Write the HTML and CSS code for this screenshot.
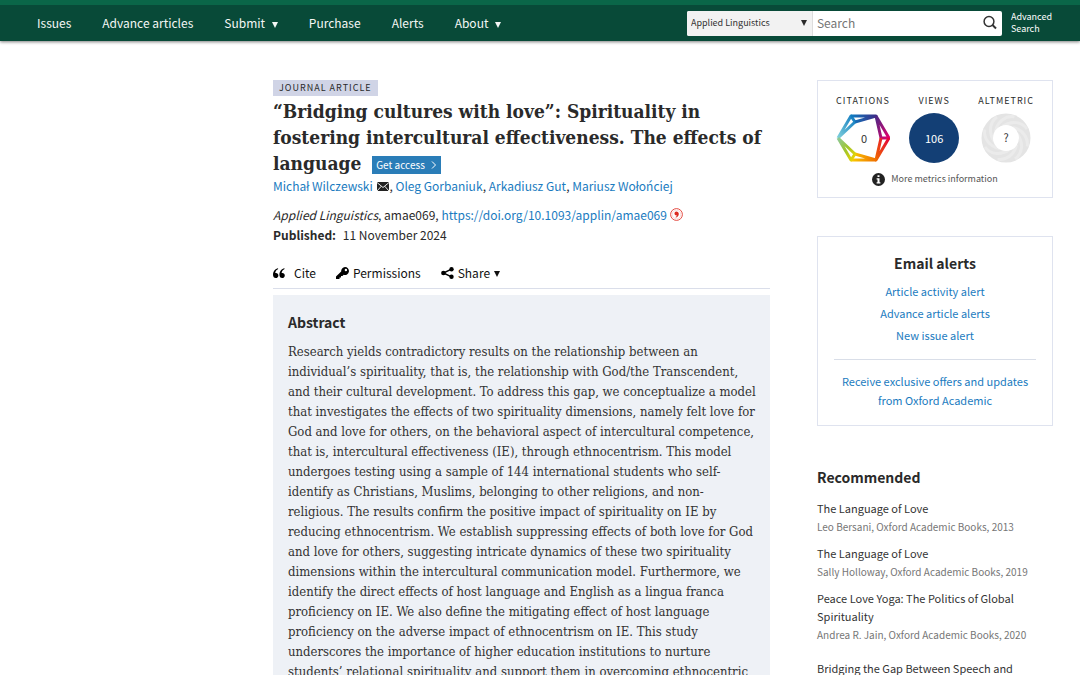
FILE: index.html
```html
<!DOCTYPE html>
<html lang="en">
<head>
<meta charset="utf-8">
<title>Bridging cultures with love | Applied Linguistics</title>
<link rel="stylesheet" href="styles.css">
</head>
<body>
<header class="site-header">
  <nav class="main-nav" aria-label="Journal">
    <a href="#">Issues</a>
    <a href="#">Advance articles</a>
    <a href="#">Submit <span class="caret"></span></a>
    <a href="#">Purchase</a>
    <a href="#">Alerts</a>
    <a href="#">About <span class="caret"></span></a>
  </nav>
  <form class="search">
    <div class="search-box">
      <div class="scope">
        <select aria-label="Search scope"><option>Applied Linguistics</option></select>
        <span class="caret"></span>
      </div>
      <input type="text" placeholder="Search" aria-label="Search term">
      <button type="button" class="search-button" aria-label="Search">
        <svg width="16" height="16" viewBox="0 0 16 16" fill="none" stroke="#333" stroke-width="1.5"><circle cx="7" cy="6.500" r="4.900"/><path d="M10.500 10 14 13.500" stroke-width="2"/></svg>
      </button>
    </div>
    <a class="advanced" href="#">Advanced<br>Search</a>
  </form>
</header>

<div class="page">
  <main class="article">
    <div class="badge">JOURNAL ARTICLE</div>
    <h1 class="title">“Bridging cultures with love”: Spirituality in<br>fostering intercultural effectiveness. The effects of<br>language <a class="access" href="#">Get access
      <svg width="6" height="8" viewBox="0 0 6 8" fill="none" stroke="currentColor"><path d="M1 .5 4.5 4 1 7.5"/></svg></a></h1>
    <div class="authors"><a href="#">Michał Wilczewski</a>
      <svg class="mail" width="12" height="9" viewBox="0 0 12 9"><path fill="#222" d="M0 0h12v9H0z"/><path d="M0 .5 6 5.5 12 .5M0 9l4.3-4.8M12 9 7.7 4.2" fill="none" stroke="#fff" stroke-width=".9"/></svg>,
      <a href="#">Oleg Gorbaniuk</a>, <a href="#">Arkadiusz Gut</a>, <a href="#">Mariusz Wołońciej</a></div>
    <div class="citation"><em>Applied Linguistics</em>, amae069, <a href="#">https://doi.org/10.1093/applin/amae069</a>
      <svg class="crossmark" width="13" height="13" viewBox="0 0 13 13"><circle cx="6.5" cy="6.5" r="5.9" fill="#fff" stroke="#e0382e" stroke-width=".9"/><circle cx="6.5" cy="6.5" r="4.3" fill="none" stroke="#f0a7a2" stroke-width=".4"/><path d="M6.3 3.4c1.5 0 2.5 1 2.5 2.5 0 1.8-1.3 3.2-3 3.7l-.3-.6c.9-.4 1.4-.9 1.5-1.5-1.400.3-2.5-.6-2.500-1.900 0-1.300.800-2.200 1.800-2.200z" fill="#dc2a20"/></svg></div>
    <div class="published"><strong>Published:</strong> 11 November 2024</div>

    <div class="toolbar">
      <a class="cite" href="#"><svg width="12" height="10" viewBox="0 0 12 10"><path id="quote" d="M5 .2C2.500.8 0 3 0 6.700 0 8.700 1.100 10 2.800 10c1.500 0 2.600-1.100 2.600-2.600S4.400 4.900 3 4.900c-.3 0-.6 0-.8.1C2.400 3.200 3.600 1.700 5.200 1z"/><use href="#quote" x="6.400"/></svg>Cite</a>
      <a class="permissions" href="#"><svg width="13" height="12" viewBox="0 0 13 12"><path fill-rule="evenodd" d="M9 0a4 4 0 1 1-1.300 7.800L6.500 9H5v1.500H3.500V12H0V9.500l5.200-5.100A4 4 0 0 1 9 0zm.9 1.800a1.200 1.200 0 1 0 0 2.400 1.200 1.200 0 0 0 0-2.400z"/></svg>Permissions</a>
      <a class="share" href="#"><svg width="13" height="12" viewBox="0 0 13 12"><path d="M10.500 2.200 2.400 6l8.100 3.800" fill="none" stroke="#000" stroke-width="1.400"/><circle cx="2.400" cy="6" r="2.300"/><circle cx="10.500" cy="2.200" r="2.200"/><circle cx="10.500" cy="9.800" r="2.200"/></svg>Share<span class="caret"></span></a>
    </div>

    <section class="abstract">
      <h2>Abstract</h2>
      <p>Research yields contradictory results on the relationship between an<br>individual’s spirituality, that is, the relationship with God/the Transcendent,<br>and their cultural development. To address this gap, we conceptualize a model<br>that investigates the effects of two spirituality dimensions, namely felt love for<br>God and love for others, on the behavioral aspect of intercultural competence,<br>that is, intercultural effectiveness (IE), through ethnocentrism. This model<br>undergoes testing using a sample of 144 international students who self-<br>identify as Christians, Muslims, belonging to other religions, and non-<br>religious. The results confirm the positive impact of spirituality on IE by<br>reducing ethnocentrism. We establish suppressing effects of both love for God<br>and love for others, suggesting intricate dynamics of these two spirituality<br>dimensions within the intercultural communication model. Furthermore, we<br>identify the direct effects of host language and English as a lingua franca<br>proficiency on IE. We also define the mitigating effect of host language<br>proficiency on the adverse impact of ethnocentrism on IE. This study<br>underscores the importance of higher education institutions to nurture<br>students’ relational spirituality and support them in overcoming ethnocentric</p>
    </section>
  </main>

  <aside class="sidebar">
    <section class="card metrics">
      <div class="metric-row">
        <div class="metric">
          <div class="metric-label">CITATIONS</div>
          <svg width="54" height="50" viewBox="0 0 54 50" fill="none" stroke-width="3" stroke-linejoin="round">
            <defs>
              <linearGradient id="g1" x1="0" y1="1" x2="1" y2="0"><stop offset="0" stop-color="#7fd0dc"/><stop offset="1" stop-color="#0d78bf"/></linearGradient>
              <linearGradient id="g2" gradientUnits="userSpaceOnUse" x1="14" y1="2" x2="40" y2="2"><stop offset="0" stop-color="#0b7fc4"/><stop offset="1" stop-color="#3b2d87"/></linearGradient>
              <linearGradient id="g3" x1="0" y1="0" x2="1" y2="1"><stop offset="0" stop-color="#4a2a85"/><stop offset="1" stop-color="#e5006d"/></linearGradient>
              <linearGradient id="g4" x1="1" y1="0" x2="0" y2="1"><stop offset="0" stop-color="#e4003a"/><stop offset="1" stop-color="#f06b00"/></linearGradient>
              <linearGradient id="g5" gradientUnits="userSpaceOnUse" x1="40" y1="48" x2="14" y2="48"><stop offset="0" stop-color="#ef7000"/><stop offset="1" stop-color="#fbd000"/></linearGradient>
              <linearGradient id="g6" x1="0" y1="0" x2="1" y2="1"><stop offset="0" stop-color="#8dc99b"/><stop offset=".5" stop-color="#9fc52b"/><stop offset="1" stop-color="#f3d500"/></linearGradient>
            </defs>
            <path stroke="url(#g1)" d="M2 25 15 3 19 9 2 25"/>
            <path stroke="url(#g2)" d="M15 3 40 3 19 9"/>
            <path stroke="url(#g3)" d="M40 3 53 25H45L40 3"/>
            <path stroke="url(#g4)" d="M53 25 40 47 45 25"/>
            <path stroke="url(#g5)" d="M40 47H15M19 41 40 47"/>
            <path stroke="url(#g6)" d="M2 25 15 47 19 41 2 25"/>
            <text x="28" y="30" class="donut-text">0</text>
          </svg>
        </div>
        <div class="metric">
          <div class="metric-label">VIEWS</div>
          <div class="views">106</div>
        </div>
        <div class="metric">
          <div class="metric-label">ALTMETRIC</div>
          <svg width="50" height="50" viewBox="0 0 50 50">
            <circle cx="25" cy="25" r="24.500" fill="#e4e4e4"/>
            <g fill="none" stroke="#ebebeb" stroke-width="3">
              <path id="swirl" d="M22 13C31 7 41 9 46 16"/>
              <use href="#swirl" transform="rotate(45 25 25)"/><use href="#swirl" transform="rotate(90 25 25)"/><use href="#swirl" transform="rotate(135 25 25)"/><use href="#swirl" transform="rotate(180 25 25)"/><use href="#swirl" transform="rotate(225 25 25)"/><use href="#swirl" transform="rotate(270 25 25)"/><use href="#swirl" transform="rotate(315 25 25)"/>
            </g>
            <circle cx="25" cy="25" r="13" fill="#fff"/>
            <text x="25" y="29" class="donut-text">?</text>
          </svg>
        </div>
      </div>
      <a class="more" href="#"><svg width="13" height="13" viewBox="0 0 13 13"><circle cx="6.500" cy="6.500" r="6.500" fill="#222"/><path fill="#fff" d="M5.500 2.300h2v1.700h-2zM4.600 5.200h2.900v4h.9v1.200H4.600V9.200h.9V6.400h-.9z"/></svg>More metrics information</a>
    </section>

    <section class="card alerts">
      <h2>Email alerts</h2>
      <a href="#">Article activity alert</a>
      <a href="#">Advance article alerts</a>
      <a href="#">New issue alert</a>
      <div class="offers"><a href="#">Receive exclusive offers and updates<br>from Oxford Academic</a></div>
    </section>

    <section class="recommended">
      <h2>Recommended</h2>
      <article><a href="#">The Language of Love</a><p>Leo Bersani, Oxford Academic Books, 2013</p></article>
      <article><a href="#">The Language of Love</a><p>Sally Holloway, Oxford Academic Books, 2019</p></article>
      <article><a href="#">Peace Love Yoga: The Politics of Global<br>Spirituality</a><p>Andrea R. Jain, Oxford Academic Books, 2020</p></article>
      <article class="journal"><a href="#">Bridging the Gap Between Speech and</a></article>
    </section>
  </aside>
</div>
</body>
</html>
```

FILE: styles.css
```css
* { box-sizing: border-box; }
html { height: 100%; overflow: hidden; }
body {
  margin: 0;
  background: #fff;
  color: #2a2a2a;
  font-family: "Noto Sans CJK SC", "Noto Sans", sans-serif;
  font-size: 12px;
  line-height: 20px;
}
a { color: #1a7bc0; text-decoration: none; }
h1, h2, p { margin: 0; }
svg { flex: none; }

.caret {
  display: inline-block;
  border: 3px solid transparent;
  border-top: 6px solid currentColor;
  border-bottom: 0;
}

.site-header {
  display: flex;
  align-items: center;
  justify-content: space-between;
  height: 41px;
  padding: 0 28px 0 37px;
  background: #084a38;
  border-top: 5px solid #0a6648;
  box-shadow: 0 1px 3px rgba(0, 0, 0, .5);
}
.main-nav { display: flex; gap: 31px; }
.main-nav a { color: #f4f7f5; white-space: nowrap; }
.main-nav .caret { margin-left: 4px; }
.search { display: flex; align-items: center; gap: 9px; }
.search-box {
  display: flex;
  align-items: center;
  width: 315px;
  height: 25px;
  background: #fff;
  border-radius: 2px;
}
.scope {
  display: flex;
  align-items: center;
  width: 126px;
  height: 25px;
  padding-right: 5px;
  background: #f2f2f2;
  border-right: 1px solid #ddd;
  border-radius: 2px 0 0 2px;
}
.scope select {
  flex: 1;
  min-width: 0;
  padding: 0 0 0 4px;
  border: 0;
  background: none;
  appearance: none;
  color: #333;
  font: 9px/20px "Noto Sans CJK SC", sans-serif;
}
.search-box input {
  flex: 1;
  min-width: 0;
  padding: 0 4px;
  border: 0;
  background: none;
  font: 12px/20px "Noto Sans CJK SC", sans-serif;
}
.search-button { display: flex; padding: 0 4px; border: 0; background: none; }
.advanced { color: #fff; font-size: 9px; line-height: 12px; }

.page {
  display: grid;
  grid-template-columns: 246fr 497fr 47fr 236fr;
  padding: 39px 27px 0;
}
.article { grid-column: 2; min-width: 0; }
.sidebar { grid-column: 4; min-width: 0; }

.badge {
  width: fit-content;
  padding: 0 6px;
  background: #d0d4e6;
  font-size: 9px;
  line-height: 16px;
  letter-spacing: 1px;
}
.title {
  margin-top: 2px;
  font-family: "DejaVu Serif Condensed", "DejaVu Serif", serif;
  font-size: 19px;
  line-height: 26px;
  white-space: nowrap;
}
.access {
  display: inline-flex;
  align-items: center;
  gap: 6px;
  margin-left: 5px;
  padding: 0 4px;
  background: #2a7db8;
  color: #fff;
  font: 10px/18px "Noto Sans CJK SC", sans-serif;
  vertical-align: middle;
}
.authors { white-space: nowrap; }
.mail { margin: 0 1px; }
.citation { margin-top: 9px; white-space: nowrap; }
.crossmark { vertical-align: -1px; }
.published strong { margin-right: 4px; }
.toolbar {
  display: flex;
  gap: 20px;
  margin-top: 18px;
  padding-bottom: 5px;
  border-bottom: 1px solid #dadeea;
}
.toolbar a { display: flex; align-items: center; gap: 4px; color: #111; }
.toolbar .cite { gap: 9px; }
.toolbar .caret { margin-top: 2px; }
.abstract { margin-top: 6px; padding: 17px 15px; background: #eef1f6; }
.abstract h2 { font-size: 14px; line-height: 20px; }
.abstract p {
  margin-top: 10px;
  color: #333;
  font-family: "DejaVu Serif Condensed", "DejaVu Serif", serif;
  font-size: 13px;
  line-height: 20px;
  white-space: nowrap;
}

.card { border: 1px solid #dfe3ef; }
.metrics { padding: 10px 18px 8px; }
.metric-row { display: flex; justify-content: space-between; }
.metric { display: flex; flex-direction: column; align-items: center; gap: 2px; }
.metric-label { font-size: 9px; line-height: 20px; letter-spacing: 1px; }
.views {
  width: 50px;
  height: 50px;
  border-radius: 50%;
  background: #133f75;
  color: #fff;
  font-size: 11px;
  line-height: 50px;
  text-align: center;
}
.donut-text { fill: #333; stroke: none; font-size: 11px; text-anchor: middle; }
.more {
  display: flex;
  align-items: center;
  justify-content: center;
  gap: 6px;
  margin-top: 6px;
  color: #555;
  font-size: 9px;
}
.alerts {
  display: flex;
  flex-direction: column;
  gap: 3px;
  margin-top: 38px;
  padding: 16px 16px 15px;
  font-size: 11px;
  line-height: 19px;
  text-align: center;
}
.alerts h2 { margin-bottom: 6px; font-size: 14px; line-height: 20px; }
.offers { margin-top: 11px; padding-top: 12px; border-top: 1px solid #d9dee8; }
.recommended { margin-top: 41px; }
.recommended h2 { margin-bottom: 12px; font-size: 14px; line-height: 20px; }
.recommended article { margin-bottom: 8px; }
.recommended article a { display: block; color: #333; font-size: 11px; line-height: 18px; }
.recommended p { margin-top: 1px; color: #767676; font-size: 10px; line-height: 18px; }
.recommended .journal { padding-top: 7px; }
```
